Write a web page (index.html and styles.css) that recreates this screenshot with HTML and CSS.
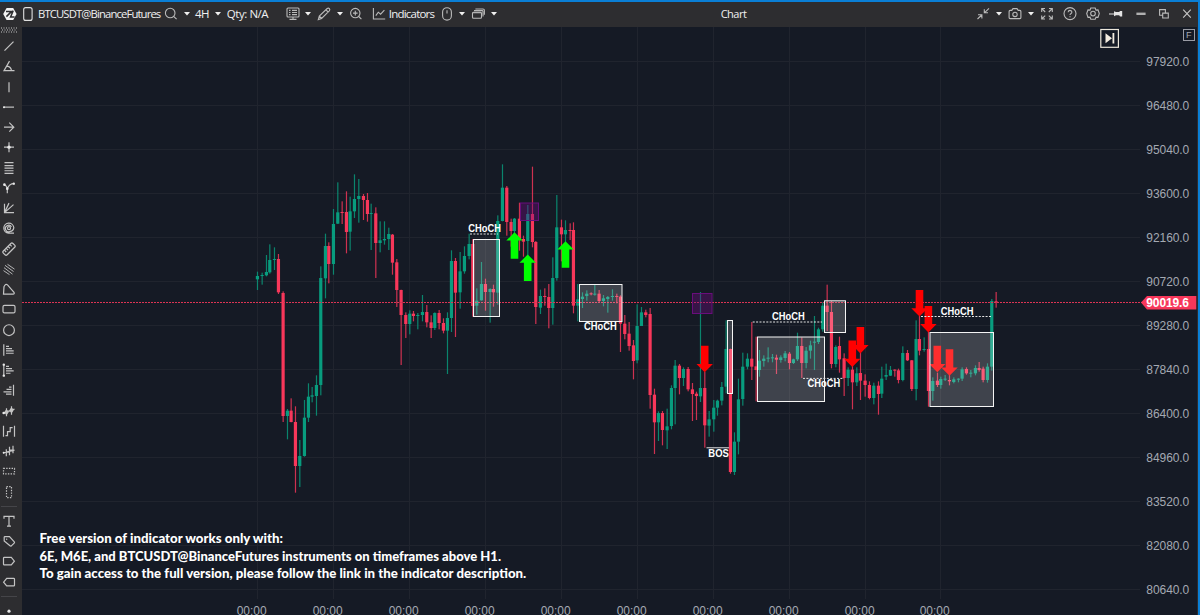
FILE: index.html
```html
<!DOCTYPE html>
<html lang="en">
<head>
<meta charset="utf-8">
<title>Chart</title>
<link rel="stylesheet" href="styles.css">
</head>
<body>
<div class="window">
  <header class="titlebar">
    <svg class="icon" viewBox="-8 -8 16 16"><path class="solid" d="M-3.4-6H3.2L6.6 0 3.2 6H-3.4L-6.8 0Z"/><path class="cut" d="M-4-2.6H1.6L-3.6 2.6M3.2-3.4L.6 3H4.6"/></svg>
    <svg class="icon bright" viewBox="-8 -8 16 16"><rect x="-4.3" y="-6.4" width="8.4" height="12.8" rx="2"/></svg>
    <span class="label symbol">BTCUSDT@BinanceFutures</span>
    <svg class="icon" viewBox="-8 -8 16 16"><circle cx="-.8" cy="-1" r="4.8"/><path d="M2.6 2.4L5.6 5.2"/></svg>
    <svg class="caret" viewBox="0 0 6 4"><path d="M0 0H6L3 3.6Z"/></svg>
    <span class="label tf">4H</span>
    <svg class="caret" viewBox="0 0 6 4"><path d="M0 0H6L3 3.6Z"/></svg>
    <span class="label qty">Qty: N/A</span>
    <i></i>
    <svg class="icon" viewBox="-8 -8 16 16"><rect x="-6" y="-6" width="12" height="9" rx="1"/><path d="M-4-3.6H-2.5M-1-3.6H4M-4-1.5H-2.5M-1-1.5H4M-4 .6H-2.5M-1 .6H4M0 3V5.4M-3.5 5.4H3.5"/></svg>
    <svg class="caret" viewBox="0 0 6 4"><path d="M0 0H6L3 3.6Z"/></svg>
    <svg class="icon" viewBox="-8 -8 16 16"><path d="M-5.7 5.6L-4.7 2 3.2-5.5Q4.4-6.4 5.4-5.3 6.3-4.2 5.3-3.1L-2.4 4.4ZM2-4.2L4.1-2M-4.7 2L-2.4 4.4"/></svg>
    <svg class="caret" viewBox="0 0 6 4"><path d="M0 0H6L3 3.6Z"/></svg>
    <svg class="icon" viewBox="-8 -8 16 16"><circle cx="-.7" cy="-.9" r="4.7"/><path d="M2.7 2.5L5.4 5.1M-3-.9H1.6M-.7-3.2V1.4"/></svg>
    <svg class="icon nudge" viewBox="-8 -8 16 16"><path d="M-5.6-6V5H6.2M-3.2 1.6L-.7-1.8 1.6.2 5.4-3.8"/></svg>
    <span class="label ind">Indicators</span>
    <svg class="icon" viewBox="-8 -8 16 16"><rect x="-4.4" y="-6.3" width="8.8" height="12.4" rx="4.4"/><path d="M0-3.8V-.6"/></svg>
    <svg class="caret" viewBox="0 0 6 4"><path d="M0 0H6L3 3.6Z"/></svg>
    <svg class="icon" viewBox="-8 -8 16 16"><rect x="-5.5" y="-1.8" width="9" height="6" rx="1"/><path d="M-5.3-1.2H3.3M-4-3.4H4.2Q5-3.4 5-2.6V2.6M-2.6-5H5Q6.4-5 6.4-3.7V.8"/></svg>
    <svg class="caret" viewBox="0 0 6 4"><path d="M0 0H6L3 3.6Z"/></svg>
    <span class="label title">Chart</span>
    <svg class="icon" viewBox="-8 -8 16 16"><path d="M6-5.6L1.6-1.4M1.3-4.8V-1.2H5M-5.5 5L-1.3 1M-5 .8H-1.1V4.6"/></svg>
    <svg class="caret" viewBox="0 0 6 4"><path d="M0 0H6L3 3.6Z"/></svg>
    <svg class="icon" viewBox="-8 -8 16 16"><path d="M-5.9-2.6Q-5.9-3.6-4.9-3.6H-3.2L-2-5.4H2L3.2-3.6H4.9Q5.9-3.6 5.9-2.6V3.6Q5.9 4.6 4.9 4.6H-4.9Q-5.9 4.6-5.9 3.6Z"/><circle cy=".4" r="2.2"/></svg>
    <svg class="caret" viewBox="0 0 6 4"><path d="M0 0H6L3 3.6Z"/></svg>
    <svg class="icon" viewBox="-8 -8 16 16"><path d="M-5.3-2V-5.5H-2M-5.3-5.5L-1.8-2M5.3-2V-5.5H2M5.3-5.5L1.8-2M-5.3 1.6V5H-2M-5.3 5L-1.8 1.6M5.3 1.6V5H2M5.3 5L1.8 1.6"/></svg>
    <svg class="icon" viewBox="-8 -8 16 16"><circle cy="-.4" r="6"/><path d="M-1.9-1.8Q-1.7-3.6 0-3.6 1.9-3.5 1.9-1.9 1.9-.8.8-.3 0 .1 0 1M0 2.2V3.2"/></svg>
    <svg class="icon" viewBox="-8 -8 16 16"><path d="M-2.2-6H2.2L3-3.9 5-4.1 6.3-.4 5 3.3 3 3.1 2.2 5.2H-2.2L-3 3.1-5 3.3-6.3-.4-5-4.1-3-3.9Z"/><circle cy="-.4" r="2.3"/></svg>
    <svg class="icon" viewBox="-8 -8 16 16"><path class="pin" d="M-7-.6H-2V-2.8L0-1.9H3.2L4-3H6.2V2.4H4L3.2 1.3H0L-2 2.2V.6H-7Z"/></svg>
    <svg class="icon" viewBox="-8 -8 16 16"><path class="thick" d="M-4.6-.2H4.6"/></svg>
    <svg class="icon" viewBox="-8 -8 16 16"><path d="M-1.3-.9H4.3V4H-1.3ZM-1.3 1.2H-4.4V-4.4H1.4V-.9"/></svg>
    <svg class="icon close" viewBox="-8 -8 16 16"><path d="M-3.8-4.4L3.8 3.6M3.8-4.4L-3.8 3.6"/></svg>
  </header>

  <div class="body">
    <nav class="tools">
      <svg class="grip" viewBox="0 0 18 6"><path d="M1 1H17M2 3H17M1 5H17"/></svg>
      <svg viewBox="-9 -10 18 20"><path d="M-4.5 4.5L4.5-4.5"/></svg>
      <svg viewBox="-9 -10 18 20"><path d="M.5-5L-5 4.5H5.5M-2 0Q2 .5 2.5 4.5"/></svg>
      <svg viewBox="-9 -10 18 20"><path d="M0-5V5"/></svg>
      <svg viewBox="-9 -10 18 20"><path d="M-5.5 0H5"/><circle class="fill" cx="-5" r="1"/></svg>
      <svg viewBox="-9 -10 18 20"><path d="M-5 0H4.5M.3-4.5L4.8 0 .3 4.5"/></svg>
      <svg viewBox="-9 -10 18 20"><path d="M-5 0H5M0-5V5"/><circle class="fill" r="1.7"/></svg>
      <svg viewBox="-9 -10 18 20"><path d="M-4.5-5.5H4.5M-4.5-2.5H4.5M-4.5 0H4.5M-4.5 2.6H4.5M-4.5 5.3H4.5"/></svg>
      <svg viewBox="-9 -10 18 20"><path d="M-4.5-3.5Q-2.5-2.5-1.7.5V5M-1.7.8Q0-4.5 5-4.5"/><circle class="fill" cx="-4.6" cy="-3.5" r="1.3"/><circle class="fill" cx="-1.7" cy=".5" r="1.3"/><circle class="fill" cx="4.8" cy="-4.5" r="1.2"/></svg>
      <svg viewBox="-9 -10 18 20"><path d="M-4.5-4.5V4.5H5M-4.5 4.5L4.5-3.5M-4.5 4.5L0-5"/></svg>
      <svg viewBox="-9 -10 18 20"><path d="M5 5H-.5A5 5 0 1 1 4.8-.5Q4.5 3 1 3.3A3.2 3.2 0 1 1 2.4-1.2"/><circle r="1.5"/></svg>
      <svg viewBox="-9 -10 18 20"><g transform="rotate(-45)"><rect x="-6.8" y="-2.7" width="13.6" height="5.4" rx="1.5"/><path d="M-4-2.5V0M-1.4-2.5V0M1.2-2.5V0M3.8-2.5V0"/></g></svg>
      <svg viewBox="-9 -10 18 20"><path class="thin" d="M-5-1.5L3.5 5M-4-3.8L4.5 2.4M-1.5-4.8L5.5 0M-5.5 1.5L.5 5.5"/></svg>
      <svg viewBox="-9 -10 18 20"><path d="M-5-2.5Q-3.5-6-1.5-4.2L5 3.2Q5.8 5 4 5H-5.5Z"/></svg>
      <svg viewBox="-9 -10 18 20"><rect x="-6" y="-3.8" width="12" height="7.6" rx="1.5"/></svg>
      <svg viewBox="-9 -10 18 20"><circle r="5.4"/></svg>
      <svg viewBox="-9 -10 18 20"><path d="M-5.2-6V5.5M-3-3.8H0M-3-1.5H3M-3 .8H4.7M-3 3.1H4.7"/></svg>
      <svg viewBox="-9 -10 18 20"><path d="M-5.2-6V5.5M-3-3.8H0M-3-1.5H3M-3 .8H4.7M-3 3.1H1.5"/><circle class="fill" cx="-5.2" cy="-5.5" r="1.2"/><circle class="fill" cx="-5.2" cy="5.5" r="1.2"/></svg>
      <svg viewBox="-9 -10 18 20"><path d="M4.5-5.5V5.5M2.5-3H0M2.5-.7H-2.5M2.5 1.8H-5.5M2.5 4H-3"/></svg>
      <svg viewBox="-9 -10 18 20"><path d="M-6 2L5.5-2M-2.5-3V5M2.5-5V3.5M-4 1L-2.5-1.2-1 1-2.5 3.2ZM1-.8L2.5-3.2 4-.8 2.5 1.6Z"/><circle class="fill" cx="-5.3" cy="1.8" r="1.3"/></svg>
      <svg viewBox="-9 -10 18 20"><path d="M-5.5-5.5V5.5M5.5-5.5V5.5M-3.5 4.5H-1.5V.5H1.2V-3.5H3.6"/></svg>
      <svg viewBox="-9 -10 18 20"><path d="M-6 1.8L5.5-1M-2.7-2V5M.5-4.5V4M4-5.5V2M-2.7 1H.5M.5-1H4"/><circle class="fill" cx="-5.3" cy="1.6" r="1"/></svg>
      <svg viewBox="-9 -10 18 20"><rect class="dots" x="-5.5" y="-2.7" width="11" height="5.4"/></svg>
      <svg viewBox="-9 -10 18 20"><rect class="dots" x="-2.5" y="-5.5" width="5" height="11"/></svg>
      <hr>
      <svg viewBox="-9 -10 18 20"><path d="M-5-2.5V-4.7H5V-2.5M0-4.7V5M-2 5H2"/></svg>
      <svg viewBox="-9 -10 18 20"><path d="M-4.8-3.8Q-4.8-4.5-4-4.5H.5L5.3.8Q5.8 1.4 5.2 2L2.3 4.8Q1.7 5.3 1 4.7L-4.8-.2Z"/><circle class="fill" cx="-2.3" cy="-2" r=".6"/></svg>
      <svg viewBox="-9 -10 18 20"><path d="M-4.7-3.8H2.3L5.4 0 2.3 3.8H-4.7Q-5.5 3.8-5.5 3V-3Q-5.5-3.8-4.7-3.8Z"/></svg>
      <svg viewBox="-9 -10 18 20"><path d="M4.7-3.8H-2.3L-5.4 0-2.3 3.8H4.7Q5.5 3.8 5.5 3V-3Q5.5-3.8 4.7-3.8Z"/></svg>
      <hr>
      <svg viewBox="-9 -10 18 20"><circle class="fill" r="1.6"/></svg>
    </nav>
    <svg class="chart" id="chart" viewBox="22 27 1175 588"></svg>
  </div>
</div>
<script src="chart.js"></script>
</body>
</html>
```

FILE: styles.css
```css
* { box-sizing: border-box; }
body { margin: 0; background: #151a25; font-family: "Open Sans", "Noto Sans", sans-serif; }
.window {
  width: 1200px; height: 615px; overflow: hidden;
  display: flex; flex-direction: column;
  border-right: 2px solid #0a7fd6;
}
.titlebar {
  flex: none; height: 27px; padding-bottom: 1px;
  border-top: 2px solid #0a7fd6; background: #2d2d30;
  display: grid; align-items: center; justify-items: center;
  grid-template-columns:
    19px 18px 125px 18px 13px 18px 13px 47px 10px 23px 8px 23px 10px 21px 21px 49px
    21px 10px 22px 10px 473px 22px 10px 22px 10px 22px 23px 23px 24px 26px 20px 24px;
}
.icon { width: 16px; height: 16px; fill: none; stroke: #bababa; stroke-width: 1.1; overflow: visible; }
.icon.bright { stroke: #e0e0e0; }
.icon .solid { fill: #f2f2f2; stroke: none; }
.icon .cut { stroke: #2d2d30; stroke-width: 1.5; }
.icon .pin { fill: #e4e4e4; stroke: none; }
.icon .thick { stroke: #b0b0b0; stroke-width: 2.4; }
.icon.nudge { margin-left: 4px; }
.icon.close { margin-left: 1px; stroke: #c8c8c8; }
.caret { width: 6px; height: 4px; fill: #f0f0f0; }
.label { color: #f0f0f0; font-size: 11.5px; line-height: 16px; white-space: nowrap; }
.symbol { justify-self: start; margin-left: 1px; font-size: 11.3px; letter-spacing: -0.88px; }
.tf { letter-spacing: -0.5px; }
.qty { letter-spacing: -0.45px; }
.ind { letter-spacing: -0.8px; }
.title { font-size: 11px; letter-spacing: -0.5px; padding-right: 4px; }

.body { flex: 1; display: flex; min-height: 0; background: #2d2d30; }
.tools { flex: none; width: 22px; display: flex; flex-direction: column; overflow: hidden; }
.tools svg { flex: none; width: 18px; height: 20.25px; fill: none; stroke: #c4c4c4; stroke-width: 1.2; }
.tools .grip { height: 6px; margin-bottom: 3px; stroke: #c8c8c8; stroke-width: 1; stroke-dasharray: 1 1.5; }
.tools .fill { fill: #e8e8e8; stroke: none; }
.tools .thin { stroke-width: .9; }
.tools .dots { stroke-dasharray: 1.4 1.3; }
.tools hr { flex: none; width: 16px; height: 1px; margin: 4px 0 4px 1px; border: 0; background: #454549; }

.chart { flex: none; width: 1175px; height: 588px; background: #151a25; }
.grid { stroke: #20242e; stroke-width: 1; shape-rendering: crispEdges; }
.up { fill: #089c7e; }
.down { fill: #f8375a; }
.wick { opacity: .82; }
.price-line { stroke: #dc3454; stroke-width: 1; stroke-dasharray: 2 1; }
.zone { fill: rgba(255, 255, 255, .18); stroke: #f4f4f4; stroke-width: 1; }
.gap { fill: rgba(110, 10, 130, .38); stroke: #690d7c; stroke-width: 1; }
.buy { fill: #00ff00; }
.sell { fill: #ff0000; }
.level { stroke: #e4e4e4; stroke-width: 1; }
.level.dash { stroke-dasharray: 2 1.4; }
.mark { fill: #fff; font: bold 10px "Liberation Sans", Arial, sans-serif; }
.axis { fill: #a4a9b2; font: 12px "Liberation Sans", Arial, sans-serif; }
.tag { fill: #f8375a; }
.tag-text { fill: #fff; font: bold 12px "Liberation Sans", Arial, sans-serif; }
.notice { fill: #fff; font: 900 12.5px Lato, sans-serif; }
.jump { fill: none; stroke: #ece6da; stroke-width: 1.2; }
.jump-glyph { fill: #f3ece0; }
.fix { fill: none; stroke: #9a9ca5; stroke-width: 1; }
.fix-text { fill: #a4a6b0; font: 9px "Liberation Sans", Arial, sans-serif; }
```

FILE: chart.js
```js
const NS = "http://www.w3.org/2000/svg";
const chart = document.getElementById("chart");

function add(name, attrs, text) {
  const el = document.createElementNS(NS, name);
  for (const key in attrs) el.setAttribute(key, attrs[key]);
  if (text) el.textContent = text;
  chart.appendChild(el);
}

// Each session holds an origin and bars: x, high, low, body top, body bottom (thirds of a pixel), g/r.
const sessions = [
  { x: 240, y: 160, bars: `52 335 390 348 358 g;66 338 374 345 347 g;79 285 349 336 346 g;89 253 341 300 337 g;103 262 330 297 300 g;115 282 402 297 397 r;129 394 786 399 768 r;142 747 838 752 768 g;153 715 787 752 786 r;166 739 998 786 918 r;179 840 981 888 918 g;193 720 890 773 888 g;205 670 786 710 773 g;216 681 727 706 710 g;229 646 767 675 708 g;242 319 706 354 675 g;256 221 415 258 355 g;266 247 370 258 312 r;280 147 344 192 312 g;293 67 192 157 191 g;306 124 192 156 159 r;319 94 280 156 216 r;330 110 272 154 215 g;343 43 174 117 154 g;356 57 188 108 117 g;370 102 180 108 120 r;382 99 185 120 162 r;393 131 270 159 162 g;407 142 354 160 249 r;420 184 277 241 249 g;433 184 254 237 241 g;446 203 270 222 237 g;457 222 344 224 308 r;470 297 441 307 390 r;483 389 615 390 465 r;497 457 534 465 492 r;509 451 523 461 492 g;520 453 484 461 468 r;533 459 508 465 468 g;547 405 484 456 465 g;560 435 502 456 487 r;573 466 534 487 504 r;584 457 510 459 504 g;597 450 508 459 489 r;610 475 520 489 512 r;622 457 642 474 512 g;634 271 516 303 474 g;646 294 531 303 398 r` },
  { x: 440, y: 150, bars: `60 306 476 364 427 g;73 289 371 318 364 g;87 251 328 282 318 g;98 267 500 282 468 r;110 415 494 452 467 g;124 336 452 402 451 g;136 386 482 402 426 r;150 415 518 417 426 g;160 404 470 417 427 r;173 196 464 213 428 g;187 43 214 113 213 g;200 108 257 113 216 r;213 206 290 216 243 r;223 204 285 206 243 g;238 158 302 206 270 r;250 257 320 267 275 r;263 165 320 192 273 g;277 50 292 192 276 r;287 273 522 276 471 r;301 419 492 438 473 g;314 415 467 438 441 r;326 402 535 441 474 r;338 322 524 384 474 g;350 135 392 232 384 g;364 209 334 232 253 r;376 211 280 240 253 g;390 220 270 240 243 r;400 217 490 240 467 r;413 402 514 448 467 g;427 427 474 440 447 g;440 421 452 431 438 g;453 427 436 430 433 r;464 403 437 431 434 g;477 420 457 431 453 r;490 435 469 445 453 g;503 438 488 441 447 g;517 418 452 438 441 g;530 431 460 438 441 r;541 436 606 440 521 r;554 495 568 521 552 r;567 516 602 551 588 r;580 570 688 586 633 r;591 463 640 528 631 g;604 471 528 487 528 g;617 479 502 487 495 r` },
  { x: 620, y: 280, bars: `90 84 386 102 345 r;103 326 522 344 427 r;115 394 483 399 427 g;127 393 496 399 450 r;141 386 507 439 451 g;154 316 448 324 438 g;165 240 433 257 324 g;178 252 343 257 294 r;190 262 318 267 294 g;204 261 334 267 328 r;217 309 423 328 342 r;229 335 420 341 348 r;241 36 366 324 349 g;254 275 503 324 436 r;267 393 470 418 437 g;281 360 455 383 418 g;292 359 407 362 383 g;305 306 376 321 362 g;318 121 340 207 320 g;331 206 581 207 576 r;343 457 585 485 576 g;355 296 523 358 485 g;368 218 377 260 357 g;382 220 268 236 260 g;395 126 300 236 260 r;408 170 364 259 270 r` },
  { x: 740, y: 280, bars: `58 210 290 242 270 g;71 226 260 236 243 g;84 202 247 233 236 g;97 222 247 232 235 g;109 224 282 233 239 r;122 226 248 232 240 g;135 213 244 220 234 g;148 216 268 221 249 r;160 236 252 238 249 g;172 158 243 198 238 g;185 172 294 198 249 r;198 201 265 212 249 g;211 182 236 196 212 g;223 108 270 185 188 g;235 143 192 148 186 g;248 67 155 77 148 g;261 14 153 77 96 r;274 63 265 96 252 r;287 196 262 201 252 g;298 170 278 198 238 r;312 220 348 235 294 r;324 262 318 269 294 g;337 258 388 269 307 r;350 262 318 280 307 g;361 218 360 279 302 r;375 283 350 302 315 r;388 304 358 315 354 r;401 308 373 317 354 g;415 304 404 317 342 r;425 260 354 296 341 g;438 251 300 285 290 g;451 258 288 270 287 g;464 268 290 269 272 r;475 266 310 271 300 r;488 199 304 219 300 g;502 210 243 219 241 r;515 240 333 241 327 r;528 121 361 177 327 g;538 108 226 177 212 r;552 172 215 207 210 g;565 156 380 207 333 r;578 292 362 303 333 g;592 278 321 302 315 r;602 290 326 297 315 g;615 285 303 296 299 g;628 285 316 300 304 r;641 292 310 298 306 g;655 295 307 296 299 g;666 262 303 268 296 g;679 262 284 267 280 r;692 270 292 278 281 g;706 256 286 264 280 g;717 246 275 264 270 r;729 260 307 266 300 r;742 250 308 260 300 g;755 57 272 63 260 g;768 36 83 64 67 r` }
];

const days = [257, 333, 409, 485, 561, 637, 713, 789, 865, 940];
for (const x of days) add("line", { class: "grid", x1: x + .5, x2: x + .5, y1: 27, y2: 599 });
for (let i = 0; i < 13; i++) {
  const y = 61 + 44 * i;
  add("line", { class: "grid", x1: 22, x2: 1140, y1: y + .5, y2: y + .5 });
  add("text", { class: "axis", x: 1146.3, y: y + 4.5, textLength: 43 }, (97920 - 1440 * i).toFixed(1));
}
for (const x of days) add("text", { class: "axis", x: x - 20.3, y: 614.6, textLength: 30 }, "00:00");

for (const s of sessions) {
  for (const bar of s.bars.split(";")) {
    const p = bar.split(" ");
    const [x, hi, lo, top, bot] = p.map(Number);
    const cls = p[5] === "g" ? "up" : "down";
    const cx = s.x + x / 3 + .1;
    add("rect", { class: cls + " wick", x: cx - .55, y: s.y + hi / 3, width: 1.2, height: (lo - hi) / 3 });
    add("rect", { class: cls, x: cx - 1.6, y: s.y + top / 3, width: 3.2, height: Math.max((bot - top) / 3, 1) });
  }
}

add("line", { class: "price-line", x1: 22, x2: 1142, y1: 302.5, y2: 302.5 });

function arrow(cls, x, y, d) {
  add("path", { class: cls, d: `M${x} ${y}l8.2 ${8.3 * d}h-4.4v${18.2 * d}h-7.6v${-18.2 * d}h-4.4z` });
}
arrow("buy", 514.5, 232.3, 1);
arrow("buy", 527.7, 254.5, 1);
arrow("buy", 565.5, 241.2, 1);
for (const [x, y] of [[704.7, 372.3], [852.3, 367], [860.4, 353.4], [919.5, 316.5], [928.4, 332.4], [937.3, 372.3], [949.5, 375.8]])
  arrow("sell", x, y, -1);

for (const [x, y, w, h] of [[520.5, 203, 18, 17.5], [692.5, 293.5, 19.5, 20]])
  add("rect", { class: "gap", x, y, width: w, height: h });
for (const [x, y, w, h] of [[473.5, 239.5, 26, 77], [579.5, 284.5, 42.5, 37], [727.5, 320.5, 5, 73], [757.5, 337, 67, 64.5], [824.5, 300.8, 21, 31.7], [930, 332.5, 63.5, 74]])
  add("rect", { class: "zone", x, y, width: w, height: h });

for (const [x1, x2, y] of [[470, 498, 234], [752.7, 822, 322], [803, 844, 378.4], [921, 991, 316.5]])
  add("line", { class: "level dash", x1, x2, y1: y, y2: y });
add("line", { class: "level", x1: 706.5, x2: 729, y1: 447.8, y2: 447.8 });
for (const [x, y] of [[468.3, 231.9], [584, 329.7], [772, 319.9], [807.5, 386.9], [940.7, 314.6]])
  add("text", { class: "mark", x, y, textLength: 32.7, lengthAdjust: "spacingAndGlyphs" }, "CHoCH");
add("text", { class: "mark", x: 708.3, y: 456.6, textLength: 20.5, lengthAdjust: "spacingAndGlyphs" }, "BOS");

const notice = [
  ["Free version of indicator works only with:", 543, 243.5],
  ["6E, M6E, and BTCUSDT@BinanceFutures instruments on timeframes above H1.", 560.5, 461.5],
  ["To gain access to the full version, please follow the link in the indicator description.", 577.6, 486.7]
];
for (const [text, y, w] of notice)
  add("text", { class: "notice", x: 39.5, y, textLength: w, lengthAdjust: "spacingAndGlyphs" }, text);

add("path", { class: "tag", d: "M1141 302.5L1147 296H1196.3V309.6H1147Z" });
add("text", { class: "tag-text", x: 1146.3, y: 306.9, textLength: 42.6 }, "90019.6");
add("rect", { class: "jump", x: 1100.8, y: 29.5, width: 17.6, height: 17.8 });
add("path", { class: "jump-glyph", d: "M1105.5 33.3L1112 38.3 1105.5 43.3ZM1112.5 33H1114.3V43.5H1112.5Z" });
add("rect", { class: "fix", x: 1183.5, y: 29.5, width: 11, height: 11 });
add("text", { class: "fix-text", x: 1186, y: 37.6 }, "F");
```
